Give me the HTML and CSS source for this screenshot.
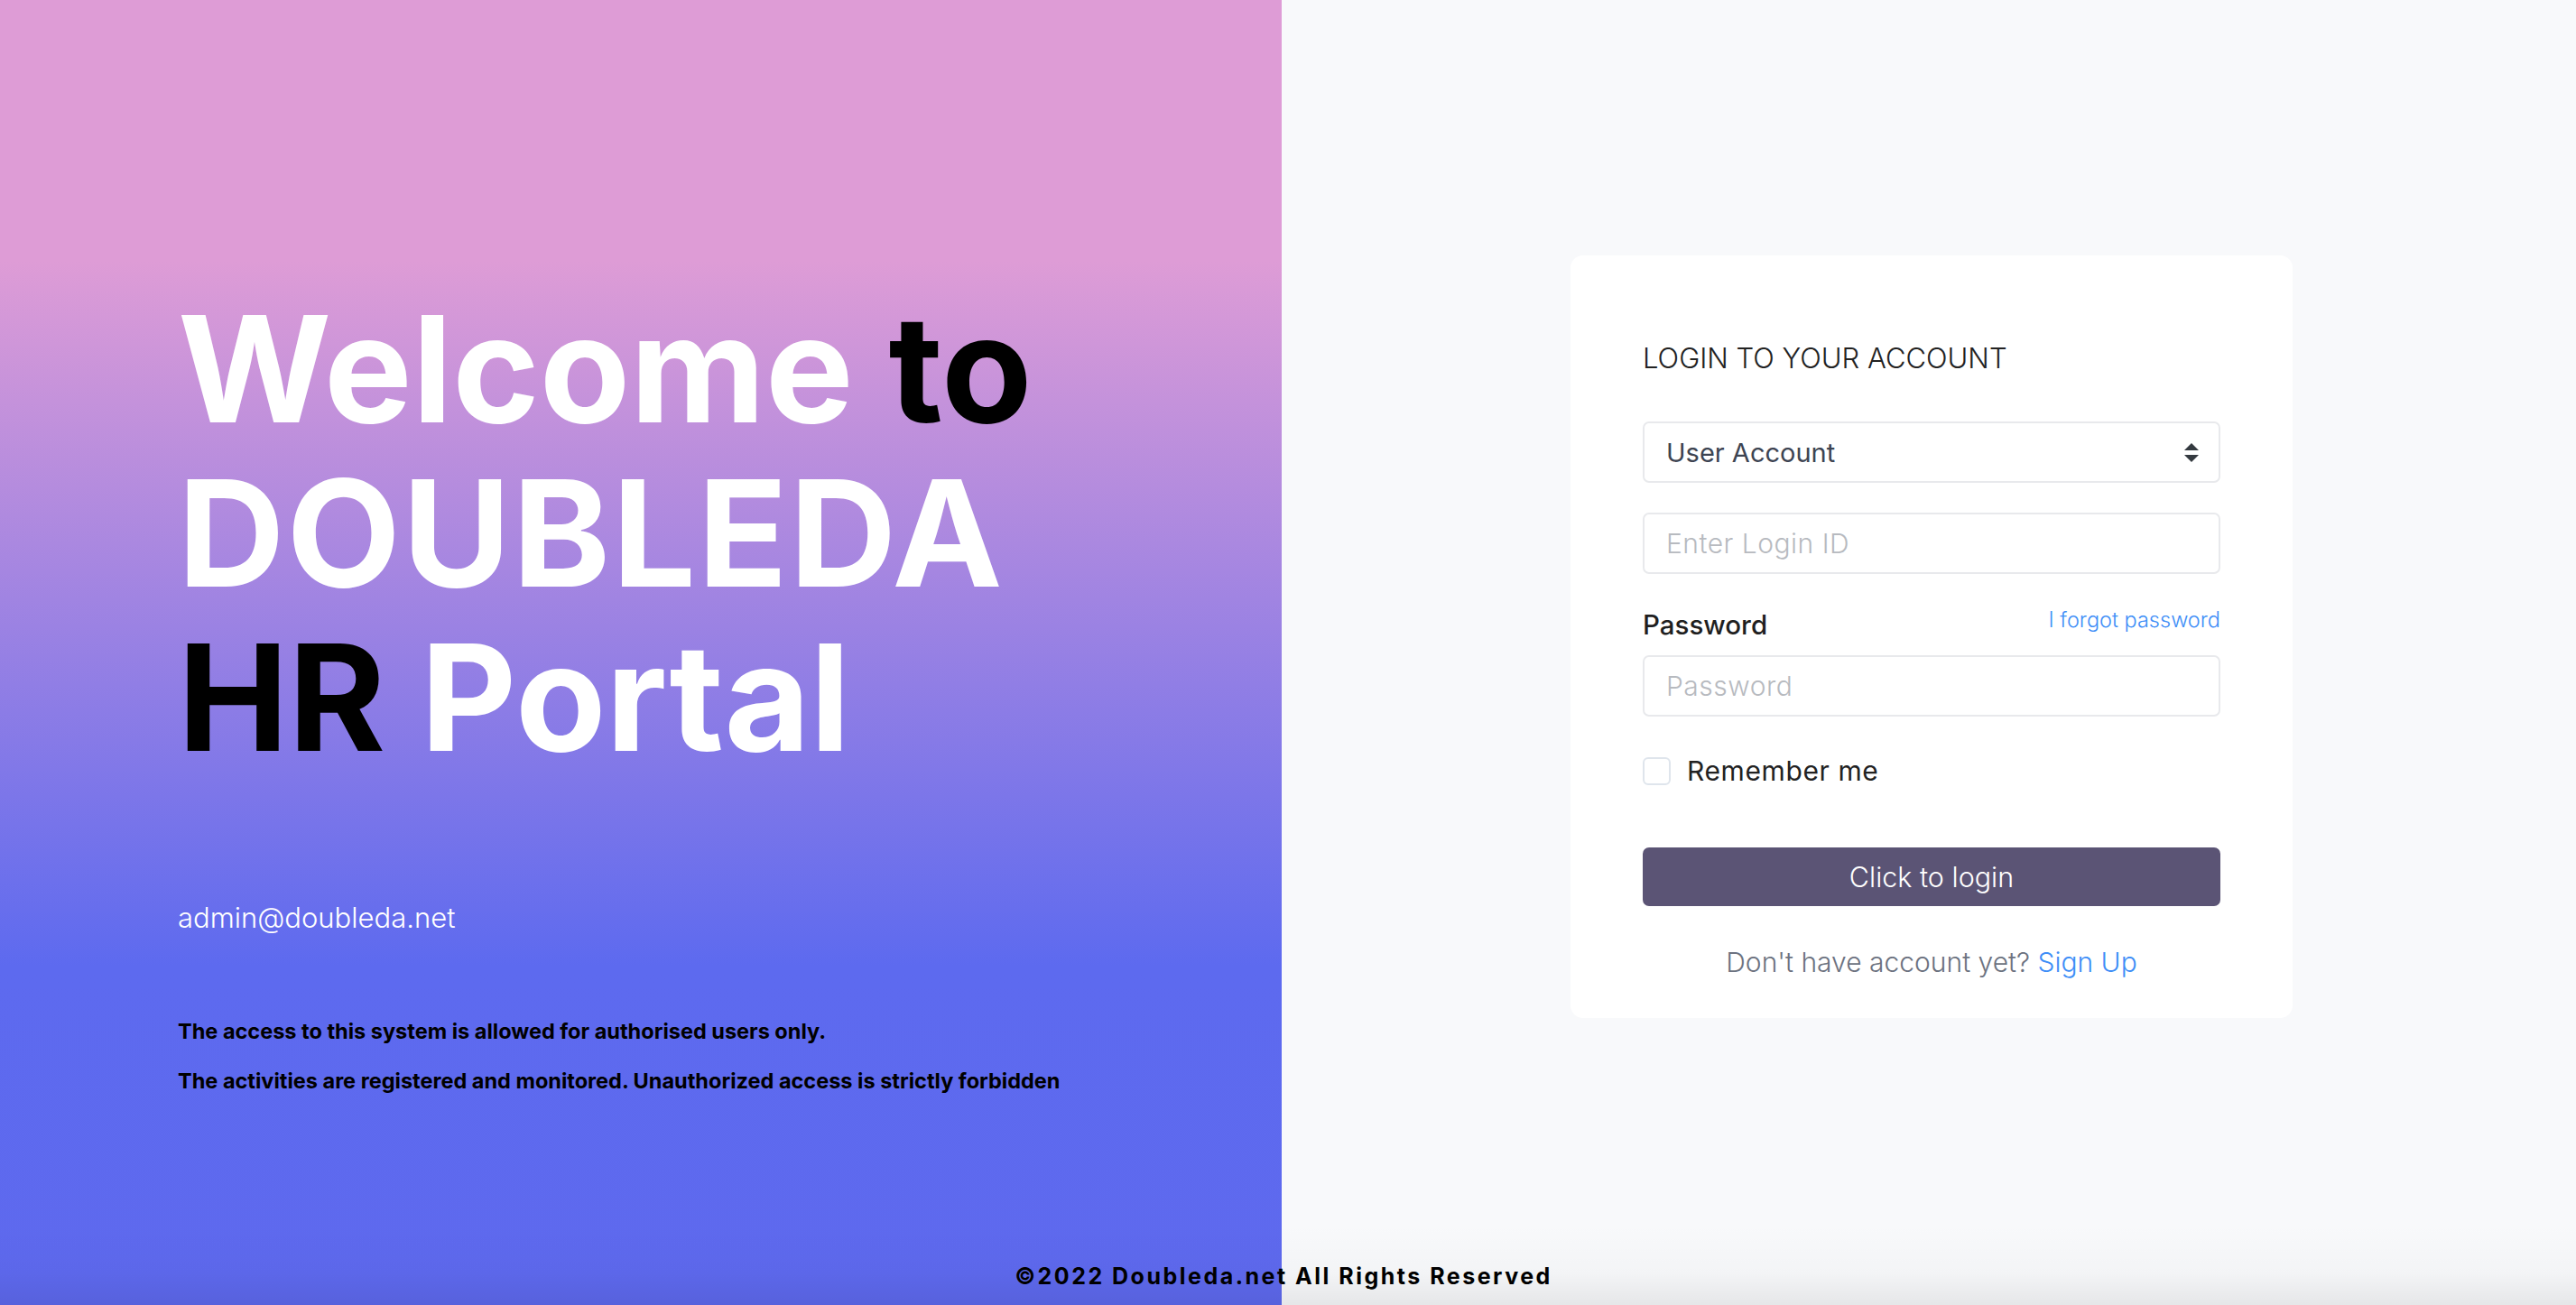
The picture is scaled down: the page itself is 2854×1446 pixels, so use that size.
FILE: index.html
```html
<!DOCTYPE html>
<html lang="en">
<head>
<meta charset="utf-8">
<title>DOUBLEDA HR Portal - Login</title>
<link rel="stylesheet" href="styles.css">
</head>
<body>
<div class="page">
  <section class="hero">
    <h1 class="hero-title">
      <span class="line">Welcome <span class="dark">to</span></span>
      <span class="line line-wide">DOUBLEDA</span>
      <span class="line"><span class="dark">HR</span> Portal</span>
    </h1>
    <p class="hero-email">admin@doubleda.net</p>
    <p class="notice notice-first">The access to this system is allowed for authorised users only.</p>
    <p class="notice">The activities are registered and monitored. Unauthorized access is strictly forbidden</p>
  </section>
  <section class="auth">
    <form class="card">
      <h2 class="card-title">LOGIN TO YOUR ACCOUNT</h2>
      <div class="select-wrap">
        <div class="field select">User Account</div>
        <svg class="select-arrows" width="16" height="21" viewBox="0 0 16 21"><path d="M8 0 L16 8 H0 Z M8 21 L16 13 H0 Z" fill="#343a40"/></svg>
      </div>
      <div class="field field-login placeholder">Enter Login ID</div>
      <div class="pw-row">
        <span class="pw-label">Password</span>
        <a class="forgot" href="#">I forgot password</a>
      </div>
      <div class="field field-pw placeholder">Password</div>
      <label class="remember"><span class="check"></span><span class="remember-text">Remember me</span></label>
      <div class="btn">Click to login</div>
      <p class="signup">Don't have account yet? <a href="#">Sign Up</a></p>
    </form>
  </section>
  <footer class="footer">©2022 Doubleda.net All Rights Reserved</footer>
</div>
</body>
</html>
```

FILE: styles.css
```css
html, body {
  margin: 0;
  padding: 0;
}
body {
  font-family: "Inter", "Liberation Sans", sans-serif;
  color: #222;
}
.page {
  position: relative;
  display: grid;
  grid-template-columns: 1420px 1fr;
  height: 1446px;
  overflow: hidden;
}
.hero {
  background: linear-gradient(to bottom, #de9cd6 20%, #5d6aef 74%, #5e69ee 100%);
  padding: 318px 0 0 197px;
  color: #fff;
}
.hero-title {
  margin: 0;
  font-size: 164px;
  font-weight: 700;
  color: #fff;
}
.line {
  display: block;
  height: 182px;
  line-height: 182px;
  white-space: nowrap;
}
.line-wide { letter-spacing: 2px; }
.dark { color: #000; }
.hero-email {
  margin: 135px 0 0;
  font-size: 31px;
  line-height: 36px;
  font-weight: 300;
}
.notice {
  margin: 25px 0 0;
  font-size: 23.5px;
  line-height: 30px;
  font-weight: 700;
  color: #000;
}
.notice-first { margin-top: 93px; }

.auth {
  background: #f8f9fb;
  display: flex;
  justify-content: flex-start;
  align-items: flex-start;
  padding: 283px 0 0 320px;
}
.card {
  width: 800px;
  box-sizing: border-box;
  background: #fff;
  border-radius: 14px;
  padding: 94px 80px 44px;
  display: flex;
  flex-direction: column;
}
.card-title {
  margin: 0;
  font-size: 31px;
  line-height: 40px;
  font-weight: 300;
  color: #222;
}
.select-wrap {
  position: relative;
  margin-top: 50px;
}
.field {
  height: 68px;
  box-sizing: border-box;
  border: 2px solid #e8e9ec;
  border-radius: 7px;
  padding: 0 24px;
  display: flex;
  align-items: center;
  font-size: 29px;
  color: #3d4452;
}
.select-arrows {
  position: absolute;
  right: 24px;
  top: 24px;
}
.placeholder {
  color: #b7babf;
  font-weight: 300;
  font-size: 30px;
  letter-spacing: 0.5px;
}
.field-login { margin-top: 33px; }
.pw-row {
  margin-top: 38px;
  height: 36px;
  display: flex;
  justify-content: space-between;
  align-items: center;
}
.pw-label {
  font-size: 29.5px;
  font-weight: 500;
  color: #1f1f1f;
}
.forgot {
  font-size: 23.5px;
  font-weight: 300;
  color: #3e8ef7;
  text-decoration: none;
  align-self: flex-start;
  margin-top: -2px;
}
.field-pw { margin-top: 16px; }
.remember {
  margin-top: 42px;
  display: flex;
  align-items: center;
  gap: 18px;
}
.check {
  width: 31px;
  height: 31px;
  box-sizing: border-box;
  border: 2px solid #dfe5ec;
  border-radius: 6px;
}
.remember-text {
  font-size: 30px;
  letter-spacing: 0.6px;
  color: #222;
}
.btn {
  margin-top: 67px;
  height: 65px;
  border-radius: 7px;
  background: #5b5475;
  color: #fff;
  font-size: 30.5px;
  font-weight: 300;
  display: flex;
  align-items: center;
  justify-content: center;
}
.signup {
  margin: 44px 0 0;
  text-align: center;
  font-size: 30px;
  line-height: 36px;
  font-weight: 300;
  color: #6c7280;
}
.signup a {
  color: #3e8ef7;
  text-decoration: none;
}
.footer {
  position: absolute;
  left: 0;
  right: 0;
  bottom: 0;
  height: 90px;
  box-sizing: border-box;
  padding: 0 10px 18px 0;
  display: flex;
  align-items: flex-end;
  justify-content: center;
  background: linear-gradient(to bottom, rgba(0,0,0,0) 0%, rgba(0,0,0,0.02) 60%, rgba(0,0,0,0.075) 100%);
  font-size: 25px;
  line-height: 28px;
  font-weight: 700;
  letter-spacing: 2.5px;
  color: #000;
}
```
